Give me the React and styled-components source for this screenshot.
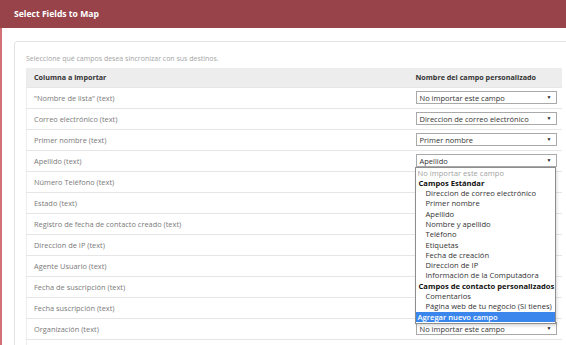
import React from 'react';
import styled, { createGlobalStyle } from 'styled-components';

const GlobalStyle = createGlobalStyle`
  html, body {
    margin: 0;
    padding: 0;
    background: #fff;
    overflow: hidden;
  }
  body {
    font-family: "Open Sans", "Liberation Sans", sans-serif;
  }
`;

const Modal = styled.div`
  width: 580px;
  height: 345px;
  border-left: 2px solid #d27278;
  box-sizing: border-box;
  position: relative;
`;

const Header = styled.div`
  height: 28px;
  margin-left: -2px;
  background: #984349;
  color: #fff;
  font-size: 8.6px;
  font-weight: 700;
  display: flex;
  align-items: center;
  padding-left: 14px;
`;

const Body = styled.div`
  padding: 13px 0 0 12px;
`;

const Panel = styled.div`
  border: 1px solid #e3e3e3;
  border-radius: 3px;
  padding: 11px 12px 0 11px;
  width: 535px;
`;

const Description = styled.div`
  font-size: 7px;
  line-height: 11px;
  color: #a5a5a5;
  margin-bottom: 4px;
`;

const Table = styled.table`
  width: 535px;
  table-layout: fixed;
  border-collapse: collapse;
  border-left: 1px solid #ececec;
`;

const Th = styled.th`
  background: #ededed;
  height: 19px;
  padding: 0 7px;
  text-align: left;
  font-size: 7.2px;
  font-weight: 700;
  color: #333;
  white-space: nowrap;
  width: ${p => p.$width}px;
  box-sizing: border-box;
`;

const Row = styled.tr`
  border-top: 1px solid #e6e6e6;
`;

const Td = styled.td`
  height: 20px;
  padding: 0 7px;
  font-size: 7.4px;
  color: #7a7a7a;
  vertical-align: middle;
  white-space: nowrap;
`;

const SelectCell = styled(Td)`
  padding: 0 6px 0 7px;
  position: relative;
`;

const SelectBox = styled.div`
  height: 13px;
  border: 1px solid #a9a9a9;
  background: #fff;
  display: flex;
  align-items: center;
  justify-content: space-between;
  padding: 0 4px 0 3px;
  font-size: 7.5px;
  color: #333;
  box-sizing: border-box;
  width: 141px;
`;

const Arrow = styled.span`
  font-size: 5px;
  color: #222;
  line-height: 1;
`;

const ListBox = styled.div`
  position: absolute;
  top: 16px;
  left: 6px;
  width: 141px;
  box-sizing: border-box;
  border: 1px solid #8e8e8e;
  background: #fff;
  z-index: 5;
  padding: 0 0 1px;
  box-shadow: 1px 2px 3px rgba(0, 0, 0, 0.15);
`;

const Option = styled.div`
  font-size: 7.6px;
  line-height: 10.3px;
  padding-left: ${p => (p.$indent ? 10 : 2)}px;
  color: ${p => (p.$muted ? '#a3a3a3' : p.$active ? '#fff' : '#333')};
  background: ${p => (p.$active ? '#3a86ec' : 'transparent')};
  font-weight: ${p => (p.$active ? 600 : 400)};
  white-space: nowrap;
`;

const Group = styled.div`
  font-size: 7.6px;
  line-height: 10.3px;
  padding-left: 3px;
  font-weight: 700;
  color: #111;
  white-space: nowrap;
`;

const rows = [
  ['"Nombre de lista" (text)', 'No importar este campo'],
  ['Correo electrónico (text)', 'Direccion de correo electrónico'],
  ['Primer nombre (text)', 'Primer nombre'],
  ['Apellido (text)', 'Apellido', true],
  ['Número Teléfono (text)'],
  ['Estado (text)'],
  ['Registro de fecha de contacto creado (text)'],
  ['Direccion de IP (text)'],
  ['Agente Usuario (text)'],
  ['Fecha de suscripción (text)'],
  ['Fecha suscripción (text)'],
  ['Organización (text)', 'No importar este campo'],
  [''],
];

const standard = [
  'Direccion de correo electrónico',
  'Primer nombre',
  'Apellido',
  'Nombre y apellido',
  'Teléfono',
  'Etiquetas',
  'Fecha de creación',
  'Direccion de IP',
  'Información de la Computadora',
];

const custom = ['Comentarios', 'Página web de tu negocio (Si tienes)'];

function Dropdown() {
  return (
    <ListBox>
      <Option $muted>No importar este campo</Option>
      <Group>Campos Estándar</Group>
      {standard.map(s => (
        <Option key={s} $indent>{s}</Option>
      ))}
      <Group>Campos de contacto personalizados</Group>
      {custom.map(s => (
        <Option key={s} $indent>{s}</Option>
      ))}
      <Option $active>Agregar nuevo campo</Option>
    </ListBox>
  );
}

export default function App() {
  return (
    <Modal>
      <GlobalStyle />
      <Header>Select Fields to Map</Header>
      <Body>
        <Panel>
          <Description>Seleccione qué campos desea sincronizar con sus destinos.</Description>
          <Table>
            <thead>
              <tr>
                <Th $width={382}>Columna a importar</Th>
                <Th $width={153}>Nombre del campo personalizado</Th>
              </tr>
            </thead>
            <tbody>
              {rows.map(([label, value, open], i) => (
                <Row key={i}>
                  <Td>{label}</Td>
                  <SelectCell>
                    {value && (
                      <SelectBox>
                        <span>{value}</span>
                        <Arrow>▼</Arrow>
                      </SelectBox>
                    )}
                    {open && <Dropdown />}
                  </SelectCell>
                </Row>
              ))}
            </tbody>
          </Table>
        </Panel>
      </Body>
    </Modal>
  );
}
